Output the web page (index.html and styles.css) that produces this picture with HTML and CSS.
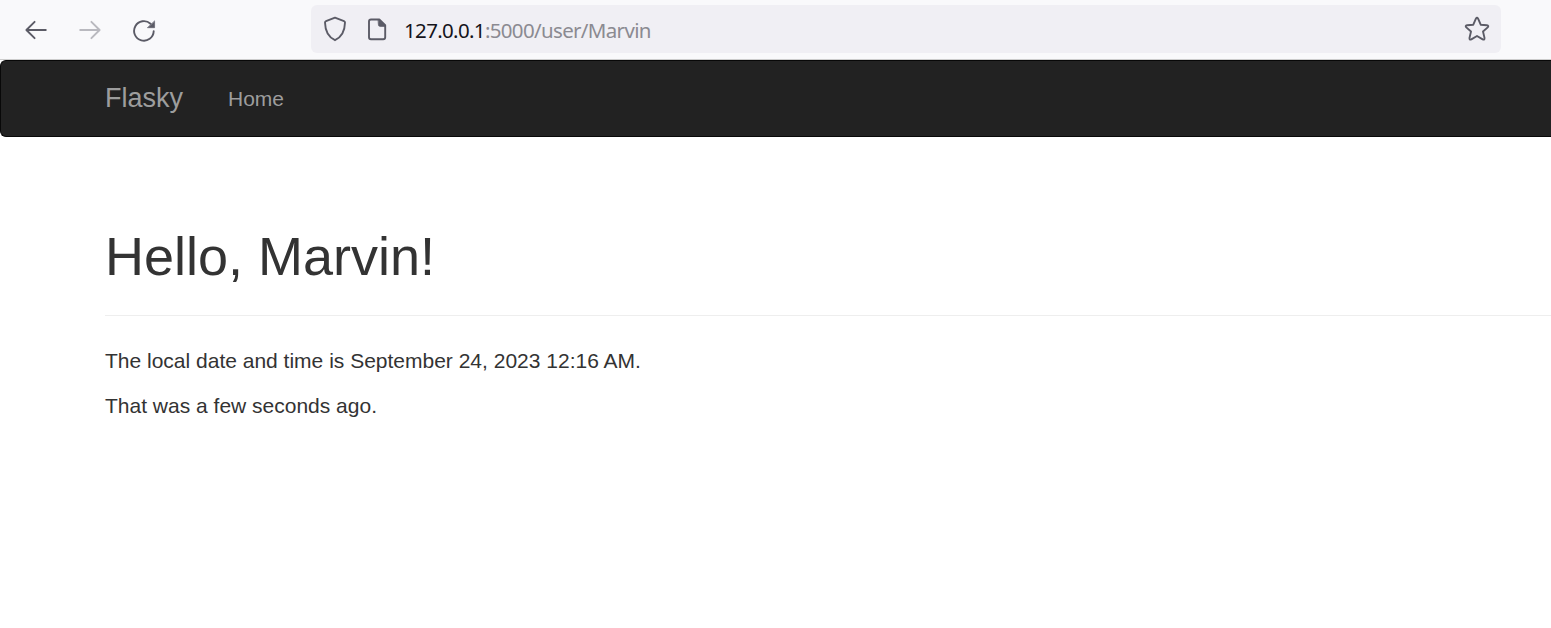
FILE: index.html
```html
<!DOCTYPE html>
<html lang="en">
<head>
<meta charset="utf-8">
<title>Flasky</title>
<link rel="stylesheet" href="styles.css">
</head>
<body>
<div class="toolbar">
  <div class="nav-buttons">
    <svg class="icon" width="24" height="24" viewBox="0 0 24 24"><path d="M21.800 12H2.800M10.600 3.800L2.400 12l8.200 8.200"/></svg>
    <svg class="icon disabled" width="24" height="24" viewBox="0 0 24 24"><path d="M2.200 12h19M13.400 3.800l8.200 8.200-8.200 8.200"/></svg>
    <svg class="icon" width="24" height="24" viewBox="0 0 24 24"><path d="M21.700 13.300a9.800 9.800 0 1 1-3.200-7.600"/><path class="solid" d="M22.600 3.200v6.500h-6.900z"/></svg>
  </div>
  <div class="address">
    <svg class="icon" width="24" height="26" viewBox="0 0 24 26"><path d="M12 1.700L21 5.100Q22 5.500 22 6.600C21.800 15 18.500 21.300 12 24.200C5.500 21.300 2.200 15 2 6.600Q2 5.500 3 5.100Z"/></svg>
    <svg class="icon page-icon" width="20" height="24" viewBox="0 0 20 24"><path d="M12.300 2.500H4Q2 2.500 2 4.500v15.700Q2 22.200 4 22.200h12.200q2 0 2-2V8.300z"/><path class="solid" d="M11.300 2.500h1.200l5.700 5.700v1.300h-5q-1.900 0-1.900-1.900z"/></svg>
    <span class="url"><span class="host">127.0.0.1</span><span class="path">:5000/user/Marvin</span></span>
    <svg class="icon star" width="26" height="26" viewBox="0 0 26 26"><path d="M11.900 2.700Q13 .9 14.100 2.700L16.700 8.700L22.900 9.300Q25.200 9.700 23.700 11.400L19 15.500L20.500 21.900Q20.700 24.200 18.700 23.400L13 20L7.300 23.400Q5.300 24.200 5.500 21.900L7 15.500L2.300 11.400Q.8 9.700 3.100 9.300L9.300 8.700Z"/></svg>
  </div>
</div>
<nav class="navbar">
  <a class="brand">Flasky</a>
  <a class="nav-link">Home</a>
</nav>
<main class="content">
  <h1 class="page-header">Hello, Marvin!</h1>
  <p class="text">The local date and time is September 24, 2023 12:16 AM.</p>
  <p class="text">That was a few seconds ago.</p>
</main>
</body>
</html>
```
FILE: styles.css
```css
* { box-sizing: border-box; }
body {
  margin: 0;
  background: #fff;
  color: #333;
  font: 21px/30px "Liberation Sans", Arial, sans-serif;
  overflow: hidden;
}
.toolbar {
  display: flex;
  height: 60px;
  padding: 5px 50px 0 24px;
  background: #f9f9fb;
  border-bottom: 1px solid #ccc;
}
.nav-buttons {
  display: flex;
  gap: 30px;
  width: 287px;
  padding-top: 13px;
}
.icon {
  display: block;
  flex: none;
  fill: none;
  stroke: #5b5b66;
  stroke-width: 1.9;
  stroke-linecap: round;
  stroke-linejoin: round;
}
.icon .solid { fill: #5b5b66; stroke-width: .6; }
.disabled { opacity: .4; }
.address {
  display: flex;
  align-items: center;
  flex: 1;
  height: 48px;
  padding: 0 11px 0 12px;
  border-radius: 6px;
  background: #f0eff4;
}
.page-icon { margin-left: 20px; }
.url {
  flex: 1;
  margin-left: 17px;
  padding-top: 2px;
  font: 20.5px/28px "Noto Sans", sans-serif;
  letter-spacing: -.66px;
  white-space: nowrap;
}
.host { color: #15141a; }
.path { color: #8b8a91; }
.navbar {
  display: flex;
  align-items: center;
  gap: 45px;
  height: 77px;
  padding-left: 104px;
  border: 1px solid #080808;
  border-right: 0;
  border-radius: 6px 0 0 6px;
  background: #222;
  color: #9d9d9d;
}
.brand { padding-bottom: 2px; font-size: 27px; }
.content { padding: 89px 0 0 105px; }
.page-header {
  height: 90px;
  margin: 0 0 30px;
  border-bottom: 1px solid #eee;
  font-size: 54px;
  font-weight: 400;
  line-height: 60px;
}
.text { margin: 0 0 15px; }
```
